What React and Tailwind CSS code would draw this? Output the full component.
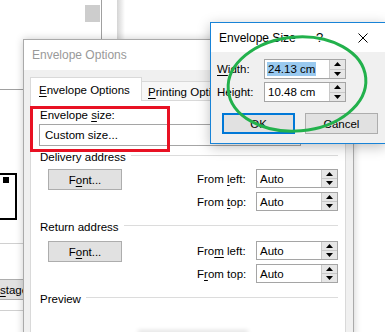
import React from 'react'

// Word "Envelope Options" dialog with the "Envelope Size" popup on top,
// plus the red / green markup drawn over the screenshot.

const FONT = "font-['Segoe_UI','Liberation_Sans',sans-serif]"

function U({ children }) {
  return <span className="underline underline-offset-2 decoration-1">{children}</span>
}

function Spinner() {
  return (
    <div className="flex flex-col w-[16px] h-full border-l border-[#c8c8c8]">
      <div className="flex-1 flex items-center justify-center bg-[#e6e6e6] border-b border-[#c8c8c8]">
        <svg width="7" height="4" viewBox="0 0 7 4"><path d="M3.5 0 L7 4 L0 4 Z" fill="#000" /></svg>
      </div>
      <div className="flex-1 flex items-center justify-center bg-[#e6e6e6]">
        <svg width="7" height="4" viewBox="0 0 7 4"><path d="M0 0 L7 0 L3.5 4 Z" fill="#000" /></svg>
      </div>
    </div>
  )
}

function SpinBox({ value, h = 'h-[19px]', selected }) {
  return (
    <div className={`flex w-[82px] ${h} bg-white border border-[#a5a5a5]`}>
      <div className="flex-1 flex items-center pl-[2px]">
        <span className={selected ? 'bg-[#99c9ef] px-px' : 'px-px'}>{value}</span>
      </div>
      <Spinner />
    </div>
  )
}

function Button({ children, className = '' }) {
  return (
    <div className={`flex items-center justify-center bg-[#e1e1e1] border border-[#adadad] ${className}`}>
      {children}
    </div>
  )
}

function GroupHeader({ title, className = '' }) {
  return (
    <div className={`flex items-start h-[14px] leading-[14px] ${className}`}>
      <span>{title}</span>
      <div className="flex-1 h-px bg-[#dcdcdc] mt-[5px] ml-[5px]" />
    </div>
  )
}

function AddressGroup({ left, top }) {
  return (
    <div className="flex items-start">
      <Button className="w-[74px] h-[21px] ml-[8px]">
        <span>F<U>o</U>nt...</span>
      </Button>
      <div className="ml-auto flex flex-col gap-[4px]">
        <div className="flex items-center">
          <span className="w-[59px]">{left}</span>
          <SpinBox value="Auto" />
        </div>
        <div className="flex items-center">
          <span className="w-[59px]">{top}</span>
          <SpinBox value="Auto" />
        </div>
      </div>
    </div>
  )
}

export default function App() {
  return (
    <div className={`relative w-[385px] h-[332px] overflow-hidden bg-white text-[11.5px] leading-[14px] text-black ${FONT}`}>
      {/* background Word window */}
      <div className="absolute left-[85px] top-[5px] w-[15px] h-[17px] bg-[#cdcdcd]" />
      <div className="absolute left-[101px] top-0 w-px h-[40px] bg-[#a0a0a0]" />
      <div className="absolute left-[117px] top-0 w-[8px] h-[40px] bg-gradient-to-r from-[#d4d4d4] to-white" />
      <div className="absolute left-0 top-[89px] w-[23px] h-px bg-[#a0a0a0]" />
      <div className="absolute left-0 top-[173px] w-[17px] h-[47px] border-2 border-l-0 border-black bg-white">
        <div className="ml-[3px] mt-[2px] w-[6px] h-[6px] bg-black" />
      </div>
      <div className="absolute left-0 top-[243px] w-[23px] h-px bg-[#d0d0d0]" />
      <div className="absolute left-[-2px] top-[279px] w-[30px] h-[21px] flex items-center bg-[#e1e1e1] border border-[#adadad] pl-[1px]">
        <span><U>s</U>tage</span>
      </div>
      <div className="absolute left-0 top-[310px] w-[23px] h-px bg-[#d0d0d0]" />

      {/* Envelope Options dialog */}
      <div className="absolute left-[23px] top-[39px] w-[331px] h-[300px] flex flex-col border border-[#aaaaaa] bg-[#f0f0f0] shadow-[0_0_8px_rgba(0,0,0,0.2)]">
        <div className="h-[30px] shrink-0 flex items-center pl-[8px] bg-white text-[#999999] text-[12px]">
          Envelope Options
        </div>
        <div className="flex flex-col pl-[6px] pr-[7px] pt-[7px]">
          <div className="flex items-end h-[24px]">
            <div className="relative z-10 w-[112px] h-[24px] flex items-center pl-[8px] bg-white border border-b-0 border-[#d9d9d9]">
              <span><U>E</U>nvelope Options</span>
            </div>
            <div className="w-[130px] h-[20px] flex items-center pl-[6px] bg-[#f7f7f7] border border-l-0 border-b-0 border-[#d9d9d9]">
              <span><U>P</U>rinting Options</span>
            </div>
          </div>
          <div className="-mt-px h-[240px] flex flex-col bg-white border border-[#d9d9d9] pl-[9px] pr-[7px]">
            <div className="mt-[7px]">Envelope <U>s</U>ize:</div>
            <div className="mt-[2px] -ml-px w-[262px] h-[22px] flex items-center pl-[5px] bg-white border border-[#a5a5a5]">
              Custom size...
            </div>
            <GroupHeader title="Delivery address" className="mt-[4px]" />
            <div className="mt-[5px]">
              <AddressGroup left={<>From <U>l</U>eft:</>} top={<>From <U>t</U>op:</>} />
            </div>
            <GroupHeader title="Return address" className="mt-[9px]" />
            <div className="mt-[7px]">
              <AddressGroup left={<>Fro<U>m</U> left:</>} top={<>F<U>r</U>om top:</>} />
            </div>
            <GroupHeader title="Preview" className="mt-[9px]" />
            <div className="mt-[26px] ml-[98px] w-[110px] h-[4px] border-t border-[#c8c8c8] shadow-[0_-2px_4px_rgba(0,0,0,0.12)]" />
          </div>
        </div>
      </div>

      {/* Envelope Size dialog */}
      <div className="absolute left-[210px] top-[22px] w-[176px] h-[122px] flex flex-col border border-[#1883d7] bg-[#f0f0f0] shadow-[0_3px_12px_rgba(0,0,0,0.25)]">
        <div className="h-[29px] shrink-0 flex items-center pl-[8px] bg-white text-[12px]">
          <span className="w-[97px]">Envelope Size</span>
          <span className="w-[8px] text-[13px]">?</span>
          <svg className="ml-[34px]" width="10" height="10" viewBox="0 0 10 10">
            <path d="M0.5 0.5 L9.5 9.5 M9.5 0.5 L0.5 9.5" stroke="#000" strokeWidth="1" />
          </svg>
        </div>
        <div className="flex flex-col pl-[6px] pt-[7px] gap-[3px]">
          <div className="flex items-center">
            <span className="w-[47px]"><U>W</U>idth:</span>
            <SpinBox value="24.13 cm" h="h-[20px]" selected />
          </div>
          <div className="flex items-center">
            <span className="w-[47px]">Height:</span>
            <SpinBox value="10.48 cm" h="h-[20px]" />
          </div>
          <div className="flex mt-[8px] pl-[5px] gap-[10px]">
            <div className="w-[73px] h-[21px] flex items-center justify-center bg-[#e1e1e1] border-2 border-[#0078d7]">OK</div>
            <Button className="w-[73px] h-[21px]">Cancel</Button>
          </div>
        </div>
      </div>

      {/* markup */}
      <div className="absolute left-[30px] top-[106px] w-[140px] h-[46px] border-[3px] border-[#e81123]" />
      <svg className="absolute left-0 top-0" width="385" height="332" viewBox="0 0 385 332">
        <ellipse cx="297" cy="84" rx="69" ry="47" transform="rotate(-5 297 84)" fill="none" stroke="#22b14c" strokeWidth="3" />
      </svg>
    </div>
  )
}
